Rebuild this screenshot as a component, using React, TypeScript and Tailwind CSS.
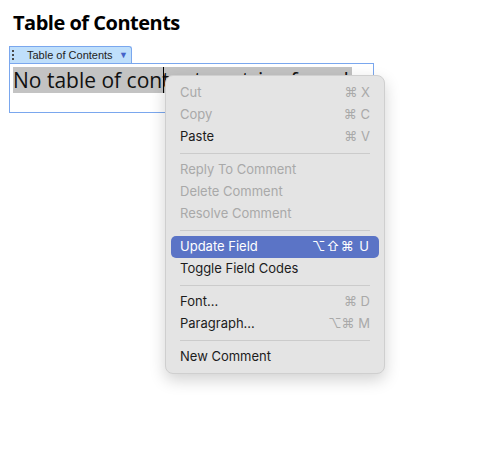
import React from "react";

type Item = { label: string; keys?: string; disabled?: boolean; active?: boolean };

const groups: Item[][] = [
  [
    { label: "Cut", keys: "⌘ X", disabled: true },
    { label: "Copy", keys: "⌘ C", disabled: true },
    { label: "Paste", keys: "⌘ V" },
  ],
  [
    { label: "Reply To Comment", disabled: true },
    { label: "Delete Comment", disabled: true },
    { label: "Resolve Comment", disabled: true },
  ],
  [
    { label: "Update Field", keys: "⌥⇧⌘ U", active: true },
    { label: "Toggle Field Codes" },
  ],
  [
    { label: "Font...", keys: "⌘ D" },
    { label: "Paragraph...", keys: "⌥⌘ M" },
  ],
  [{ label: "New Comment" }],
];

function MenuRow({ item }: { item: Item }) {
  const base = "flex items-center justify-between h-[22px] mx-[5px] px-[9px] rounded-[5px] text-[13px]";
  if (item.active) {
    return (
      <div className={`${base} bg-[#5b74c6] text-white`}>
        <span>{item.label}</span>
        <span className="tracking-[1px]">{item.keys}</span>
      </div>
    );
  }
  return (
    <div className={`${base} ${item.disabled ? "text-[#a9a9a9]" : "text-[#1c1c1c]"}`}>
      <span>{item.label}</span>
      <span className="text-[#a9a9a9]">{item.keys}</span>
    </div>
  );
}

export default function App() {
  return (
    <div className="relative w-[484px] h-[451px] bg-white font-['Open_Sans',sans-serif]">
      <div className="pt-[9px] pl-[13px]">
        <h1 className="text-[20px] leading-[28px] font-bold tracking-[-0.5px] text-black">Table of Contents</h1>
      </div>

      {/* content control */}
      <div className="ml-[9px] mt-[9px] w-[365px]">
        <div className="flex items-center w-[123px] h-[17px] bg-[#bfdffb] border border-b-0 border-[#7aa7ee] rounded-tr-[3px]">
          <div className="flex flex-col gap-[2px] ml-[2px]">
            <span className="w-[2px] h-[2px] bg-[#4a4a4a]" />
            <span className="w-[2px] h-[2px] bg-[#4a4a4a]" />
            <span className="w-[2px] h-[2px] bg-[#4a4a4a]" />
          </div>
          <span className="ml-[13px] text-[11px] text-[#222] font-['Liberation_Sans',sans-serif]">Table of Contents</span>
          <span className="ml-auto mr-[3px] text-[9px] text-[#4563c9]">▼</span>
        </div>
        <div className="h-[50px] border border-[#7aa7ee] pl-[3px] pt-[3px]">
          <div className="relative inline-block bg-[#c3c3c3] text-[21px] leading-[26px] text-[#111] pr-[3px]">
            No table of contents entries found
            <span className="absolute left-[150px] top-0 w-[1px] h-[26px] bg-black" />
          </div>
        </div>
      </div>

      {/* context menu */}
      <div className="absolute left-[165px] top-[75px] w-[220px] pt-[6px] pb-[5px] rounded-[8px] bg-[#e4e4e4] border border-[#cfcfcf] shadow-[0_6px_16px_rgba(0,0,0,0.18)] font-['Inter',sans-serif]">
        {groups.map((g, gi) => (
          <div key={gi}>
            {gi > 0 && <div className="mx-[14px] my-[5px] h-[1px] bg-[#cbcbcb]" />}
            {g.map((it) => (
              <MenuRow key={it.label} item={it} />
            ))}
          </div>
        ))}
      </div>
    </div>
  );
}
